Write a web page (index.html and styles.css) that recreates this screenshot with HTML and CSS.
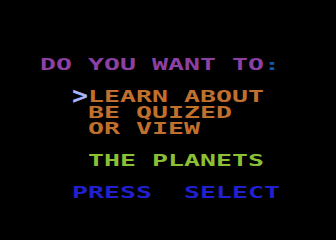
FILE: index.html
```html
<!DOCTYPE html>
<html>
	<head>
		<meta charset="utf-8">
		<title>The Planets</title>
		<link rel="stylesheet" href="styles.css">
	</head>
	<body>
		<div class="screen">
			<div class="row"><span class="txt col2 purple">DO YOU WANT TO<span class="colon">:</span></span></div>
			<div class="row"></div>
			<div class="row"><span class="txt col4"><span class="arrow">&gt;</span><span class="orange">LEARN ABOUT</span></span></div>
			<div class="row"><span class="txt col5 orange">BE QUIZED</span></div>
			<div class="row"><span class="txt col5 orange">OR VIEW</span></div>
			<div class="row"></div>
			<div class="row"><span class="txt col5 green">THE PLANETS</span></div>
			<div class="row"></div>
			<div class="row"><span class="txt col4 blue">PRESS  SELECT</span></div>
		</div>
	</body>
</html>
```

FILE: styles.css
```css
html, body {
	margin: 0;
	padding: 0;
	background: #000;
}
.screen {
	width: 336px;
	height: 240px;
	padding: 56px 0 0 8px;
	box-sizing: border-box;
	overflow: hidden;
	background: #000;
}
.row {
	height: 16px;
	white-space: pre;
}
/* 1ch = 16px = one character cell */
.txt {
	display: block;
	font-family: "DejaVu Sans Mono", monospace;
	font-weight: bold;
	font-size: 26.58px;
	line-height: 16px;
	transform: translateY(3.4px) scaleY(0.62);
	transform-origin: 0 0;
}
.col2 { padding-left: 2ch; }
.col4 { padding-left: 4ch; }
.col5 { padding-left: 5ch; }

.purple { color: #8c40a4; }
.colon { color: #1058b0; }
.arrow {
	display: inline-block;
	color: #a4b4fc;
	transform: scaleY(1.45);
	transform-origin: 50% 62%;
}
.orange { color: #c0702c; }
.green { color: #8cc034; }
.blue { color: #2020d0; }
```
